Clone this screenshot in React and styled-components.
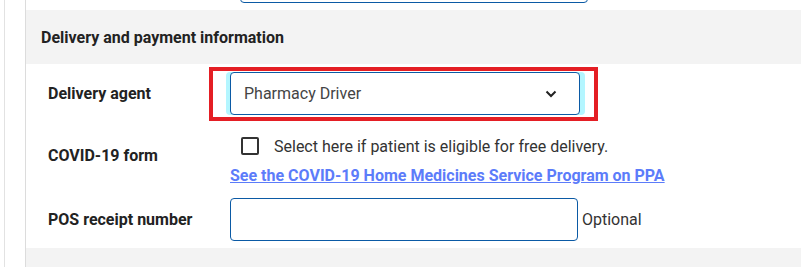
import React from "react";
import styled, { createGlobalStyle } from "styled-components";

const Global = createGlobalStyle`
  html, body { margin: 0; padding: 0; background: #fff; }
  body { font-family: Roboto, "Liberation Sans", Arial, sans-serif; color: #222; }
  * { box-sizing: border-box; }
`;

const Page = styled.div`
  width: 801px;
  height: 267px;
  overflow: hidden;
  padding-left: 4px;
`;

const Gutter = styled.div`
  height: 100%;
  border-left: 1px solid #e2e2e2;
  padding-left: 20px;
`;

const Panel = styled.div`
  height: 100%;
  border-left: 1px solid #dcdcdc;
  display: flex;
  flex-direction: column;
`;

const PrevRow = styled.div`
  height: 10px;
  overflow: hidden;
  display: flex;
  align-items: flex-end;
  padding: 0 0 7px 214px;
`;

const PrevInput = styled.div`
  flex: none;
  width: 348px;
  height: 40px;
  border: 1px solid #0b5aa5;
  border-radius: 4px;
`;

const SectionHeader = styled.div`
  height: 54px;
  background: #f3f3f3;
  display: flex;
  align-items: center;
  padding-left: 15px;
  font-size: 16px;
  font-weight: 700;
  color: #222;
`;

const Body = styled.div`
  display: flex;
  flex-direction: column;
  padding-top: 8px;
`;

const Row = styled.div`
  display: flex;
  align-items: ${(p) => p.$align || "center"};
  margin-top: ${(p) => p.$mt || 0}px;
`;

const Label = styled.div`
  width: 204px;
  flex: none;
  padding-left: 22px;
  padding-top: ${(p) => p.$pt || 0}px;
  font-size: 16px;
  font-weight: 700;
  color: #222;
`;

const Field = styled.div`
  display: flex;
  flex-direction: column;
`;

const Highlight = styled.div`
  position: relative;
`;

const Annotation = styled.div`
  position: absolute;
  top: -5px;
  bottom: -6px;
  left: -21px;
  right: -18px;
  border: 4px solid #e41e24;
  pointer-events: none;
`;

const Select = styled.div`
  width: 350px;
  height: 43px;
  border: 1px solid #0b5aa5;
  border-radius: 4px;
  box-shadow: -4px 0 0 0 #b4f6ff, 5px 0 0 0 #b4f6ff;
  display: flex;
  align-items: center;
  justify-content: space-between;
  padding: 0 22px 0 13px;
  font-size: 16px;
  color: #444;
  background: #fff;
`;

const CheckLine = styled.label`
  display: flex;
  align-items: center;
  margin-left: 11px;
  font-size: 16px;
  color: #333;
  height: 20px;
`;

const Box = styled.span`
  width: 18px;
  height: 18px;
  border: 2px solid #333;
  border-radius: 2px;
  margin-right: 15px;
  flex: none;
`;

const Link = styled.a`
  margin-top: 10px;
  font-size: 16px;
  font-weight: 700;
  color: #5c7cfa;
  text-decoration: underline;
  line-height: 20px;
`;

const TextInput = styled.div`
  width: 348px;
  height: 43px;
  border: 1px solid #0b5aa5;
  border-radius: 4px;
`;

const Hint = styled.span`
  margin-left: 4px;
  font-size: 16px;
  color: #333;
`;

const Footer = styled.div`
  flex: 1;
  background: #f3f3f3;
  margin-top: 7px;
`;

const Chevron = () => (
  <svg width="12" height="8" viewBox="0 0 12 8" fill="none">
    <path d="M1.5 1.5 L6 6 L10.5 1.5" stroke="#222" strokeWidth="2" />
  </svg>
);

export default function App() {
  return (
    <Page>
      <Global />
      <Gutter>
        <Panel>
          <PrevRow>
            <PrevInput />
          </PrevRow>
          <SectionHeader>Delivery and payment information</SectionHeader>
          <Body>
            <Row>
              <Label>Delivery agent</Label>
              <Highlight>
                <Select>
                  <span>Pharmacy Driver</span>
                  <Chevron />
                </Select>
                <Annotation />
              </Highlight>
            </Row>
            <Row $align="flex-start" $mt={21}>
              <Label $pt={10}>COVID-19 form</Label>
              <Field>
                <CheckLine>
                  <Box />
                  Select here if patient is eligible for free delivery.
                </CheckLine>
                <Link href="#">See the COVID-19 Home Medicines Service Program on PPA</Link>
              </Field>
            </Row>
            <Row $mt={12}>
              <Label>POS receipt number</Label>
              <TextInput />
              <Hint>Optional</Hint>
            </Row>
          </Body>
          <Footer />
        </Panel>
      </Gutter>
    </Page>
  );
}
